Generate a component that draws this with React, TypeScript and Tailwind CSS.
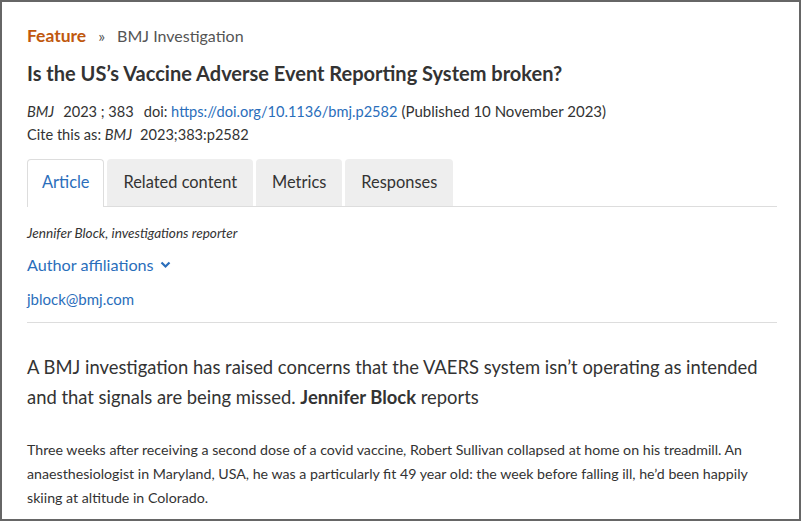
export default function App() {
  const tabs = ['Article', 'Related content', 'Metrics', 'Responses'];
  return (
    <div className="h-[521px] w-[801px] overflow-hidden border-2 border-[#666] bg-white font-['Lato',sans-serif] text-[#333]">
      <div className="pl-[25px] pr-[22px] pt-[22px]">
        <div className="flex items-center leading-[24px]">
          <span className="text-[17.5px] font-bold text-[#c0580e]">Feature</span>
          <span className="ml-[12px] text-[16px] text-[#555]">»</span>
          <span className="ml-[12px] text-[16px] text-[#555]">BMJ Investigation</span>
        </div>
        <h1 className="mt-[13px] text-[20px] font-bold leading-[24px] text-[#333]">
          Is the US’s Vaccine Adverse Event Reporting System broken?
        </h1>
        <div className="mt-[15px] text-[14.6px] leading-[23px] text-[#333]">
          <div>
            <em>BMJ</em>
            <span className="ml-[9px]">2023 ; 383</span>
            <span className="ml-[10px]">doi: </span>
            <a className="text-[#2a6ebb]">https://doi.org/10.1136/bmj.p2582</a>
            <span className="ml-[4px] text-[15px]">(Published 10 November 2023)</span>
          </div>
          <div>
            Cite this as: <em>BMJ</em>
            <span className="ml-[8px]">2023;383:p2582</span>
          </div>
        </div>
        <div className="mt-[13px] flex gap-[3px] border-b border-[#ddd] text-[16.4px]">
          {tabs.map((t, i) => (
            <div
              key={t}
              className={
                i === 0
                  ? 'mb-[-1px] rounded-t-[4px] border border-b-0 border-[#ddd] bg-white px-[14px] pb-[11px] pt-[10px] text-[#2a6ebb]'
                  : 'rounded-t-[4px] bg-[#eee] px-[16px] pb-[11px] pt-[11px] text-[#333]'
              }
            >
              {t}
            </div>
          ))}
        </div>
        <div className="mt-[17px] text-[13.6px] italic leading-[18px]">Jennifer Block, investigations reporter</div>
        <div className="mt-[11px] flex items-center gap-[6px] text-[16.2px] leading-[24px] text-[#2a6ebb]">
          Author affiliations
          <svg width="11" height="8" viewBox="0 0 11 8">
            <path d="M1.5 1.5 L5.5 5.5 L9.5 1.5" fill="none" stroke="#2a6ebb" strokeWidth="2.2" />
          </svg>
        </div>
        <div className="mt-[12px] text-[15px] leading-[20px] text-[#2a6ebb]">jblock@bmj.com</div>
        <div className="mt-[13px] border-t border-[#ddd]" />
        <p className="mt-[29px] text-[18.4px] leading-[30px] text-[#333]">
          A BMJ investigation has raised concerns that the VAERS system isn’t operating as intended and that signals are
          being missed. <strong>Jennifer Block</strong> reports
        </p>
        <p className="mt-[26px] text-[14.2px] leading-[24px] text-[#333]">
          Three weeks after receiving a second dose of a covid vaccine, Robert Sullivan collapsed at home on his
          treadmill. An anaesthesiologist in Maryland, USA, he was a particularly fit 49 year old: the week before
          falling ill, he’d been happily skiing at altitude in Colorado.
        </p>
      </div>
    </div>
  );
}
